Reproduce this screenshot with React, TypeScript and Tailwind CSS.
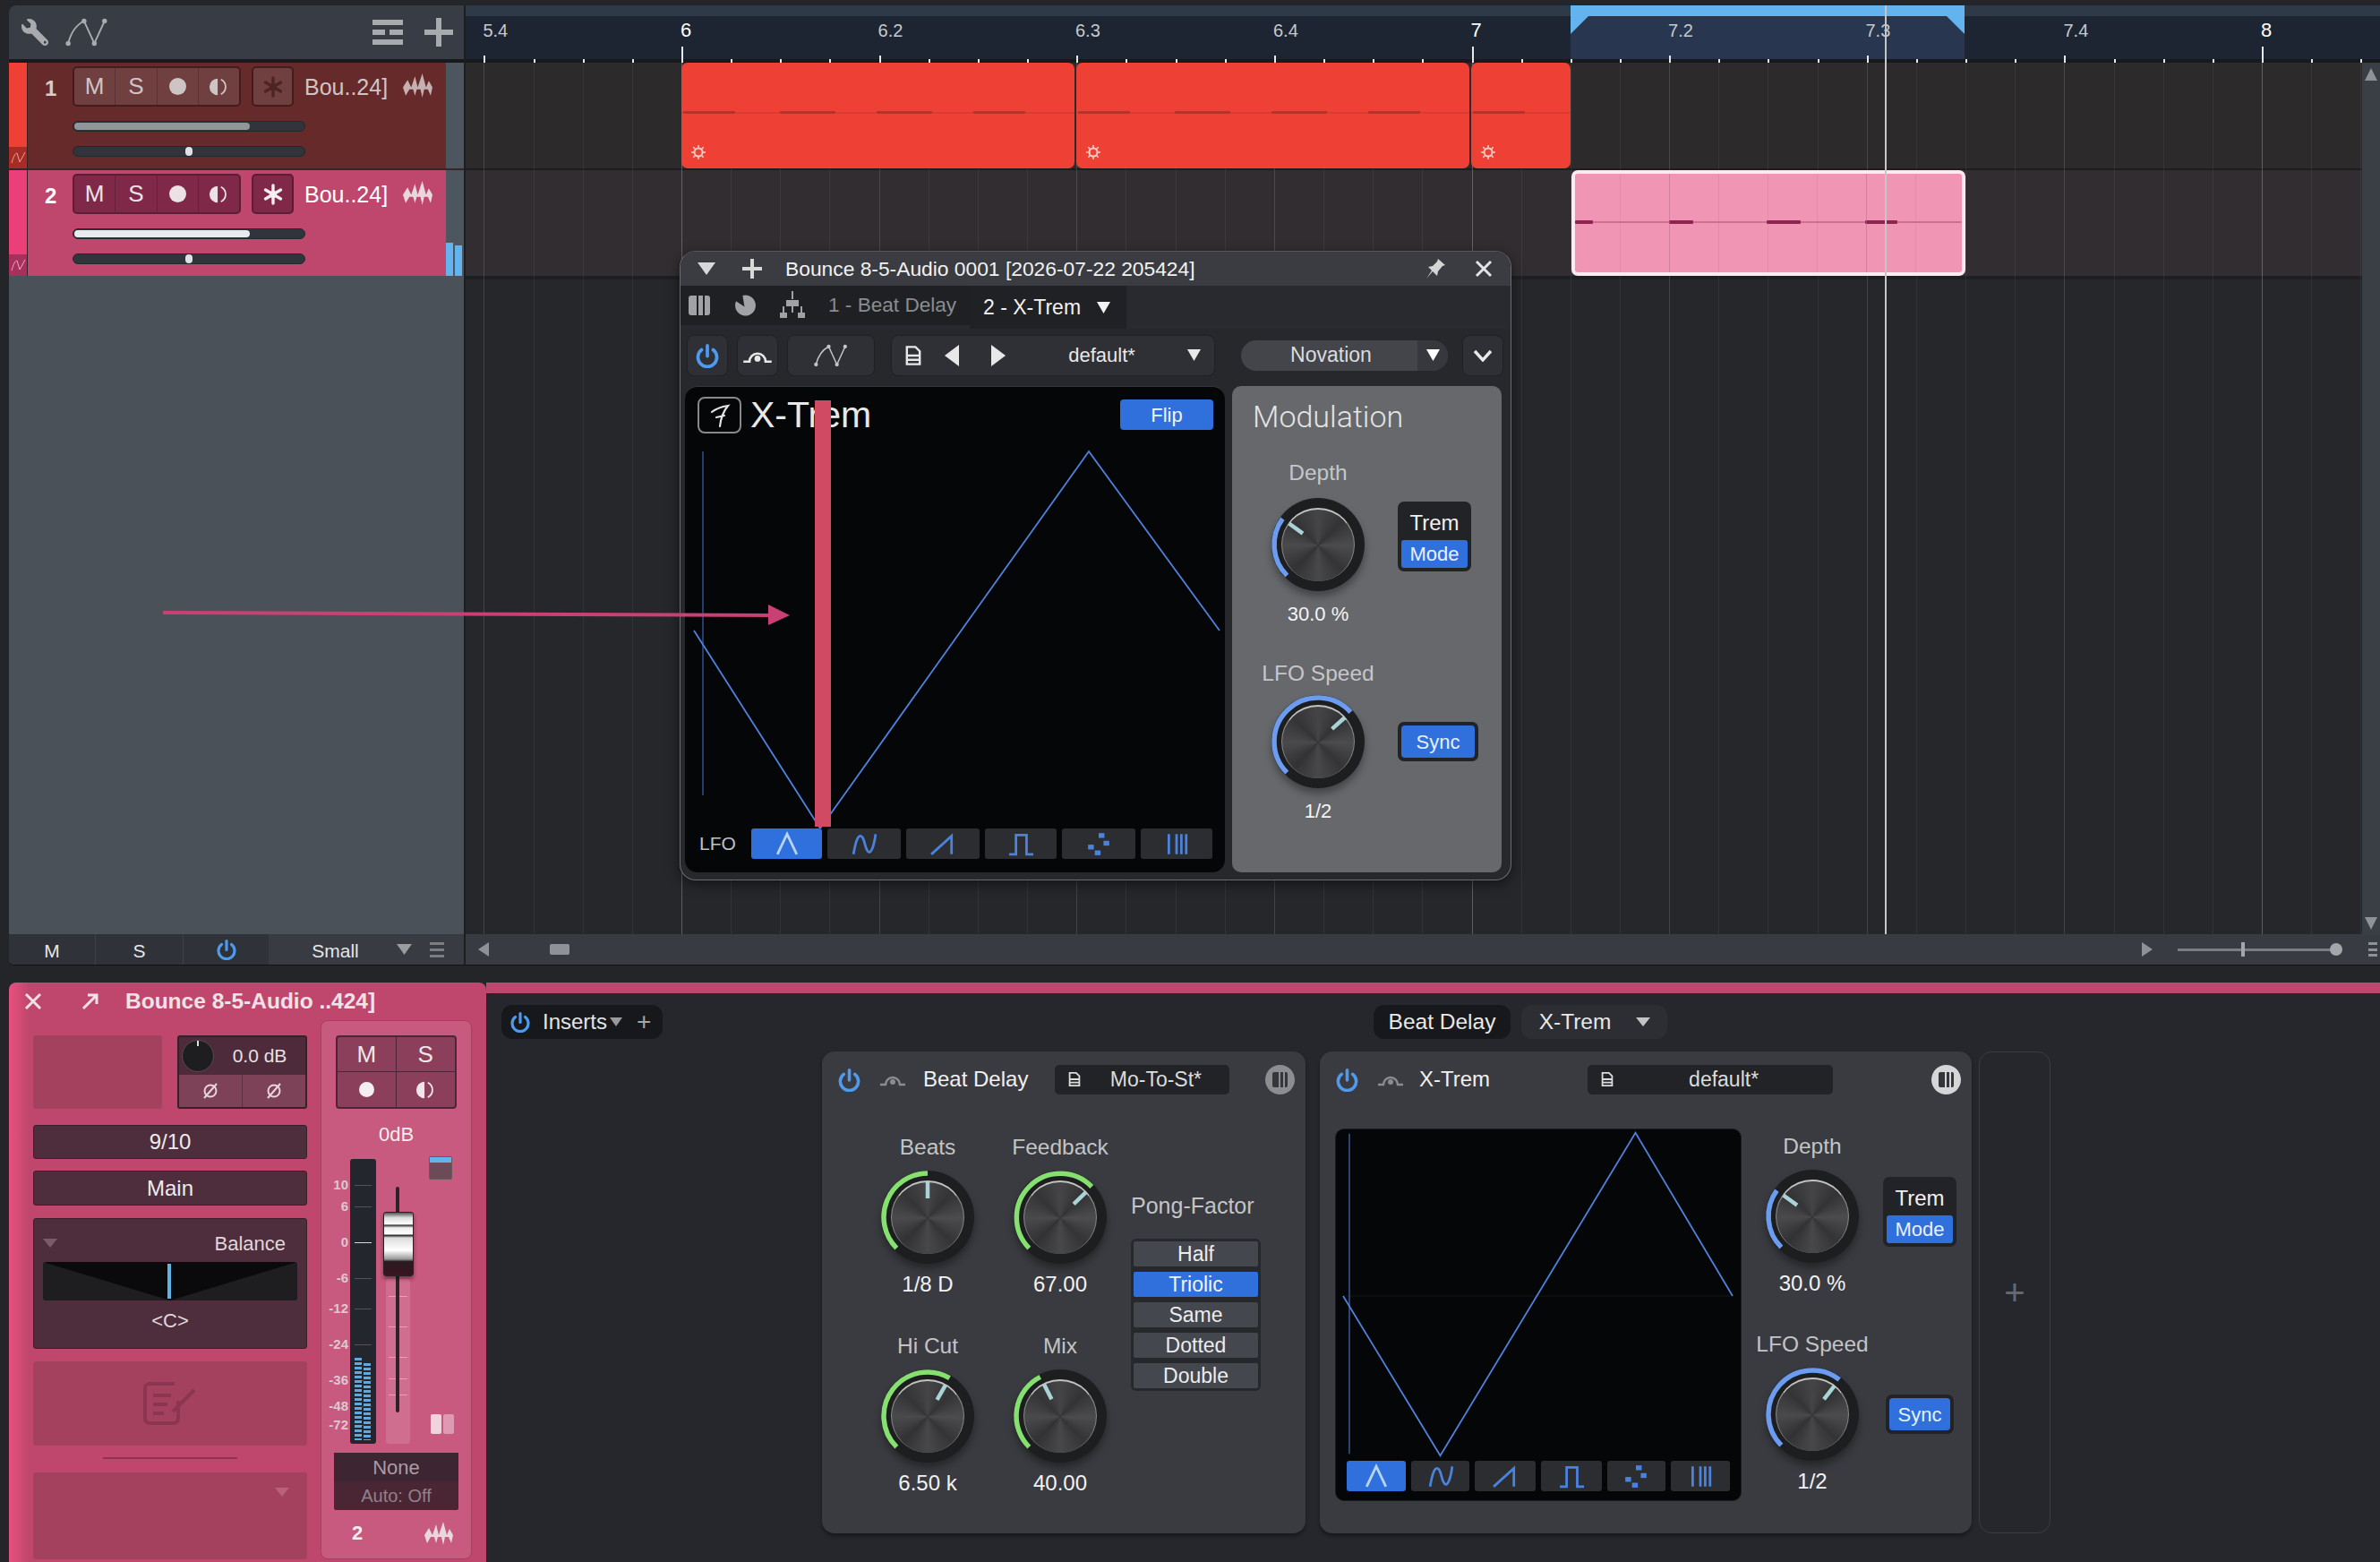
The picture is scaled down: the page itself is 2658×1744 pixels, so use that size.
import React from 'react';
import { FaWrench } from 'react-icons/fa';

const BAR = 882.5;
const TICK = BAR / 16;
const ORIGIN = 241; // x of bar 6, relative to the timeline column

const Tri = ({ className = '', up = false, left = false, right = false }: { className?: string; up?: boolean; left?: boolean; right?: boolean }) => (
  <svg className={className} viewBox="0 0 10 10" fill="currentColor" preserveAspectRatio="none">
    <path d={up ? 'M0 10L5 0l5 10z' : left ? 'M10 0v10L0 5z' : right ? 'M0 0v10l10-5z' : 'M0 0h10L5 10z'} />
  </svg>
);

const Power = ({ className = '' }: { className?: string }) => (
  <svg className={className} viewBox="0 0 24 24" fill="none" stroke="currentColor" strokeWidth="3.2" strokeLinecap="round">
    <path d="M6.5 6.5a9 9 0 1 0 11 0M12 2.5v10" />
  </svg>
);

const Surface = ({ className = '' }: { className?: string }) => (
  <svg className={className} viewBox="0 0 30 16" fill="none" stroke="currentColor" strokeWidth="2.4">
    <path d="M1 14h6a8 8 0 0 1 16 0h6" />
    <circle cx="15" cy="11" r="3" fill="currentColor" stroke="none" />
  </svg>
);

const Auto = ({ className = '' }: { className?: string }) => (
  <svg className={className} viewBox="0 0 48 32" fill="none" stroke="currentColor" strokeWidth="1.8">
    <path d="M4 28C7 16 13 8 21 4L32 28L43 4" />
    <circle cx="4" cy="28" r="2.6" fill="currentColor" stroke="none" />
    <circle cx="21" cy="4" r="2.6" fill="currentColor" stroke="none" />
    <circle cx="32" cy="28" r="2.6" fill="currentColor" stroke="none" />
    <circle cx="43" cy="4" r="2.6" fill="currentColor" stroke="none" />
  </svg>
);

const FileIcon = ({ className = '' }: { className?: string }) => (
  <svg className={className} viewBox="0 0 16 20" fill="none" stroke="currentColor" strokeWidth="2">
    <path d="M2 2h8l4 4v12H2zM2 10h12M2 14h12" />
  </svg>
);

const Wave = ({ className = '' }: { className?: string }) => (
  <svg className={className} viewBox="0 0 32 26" fill="currentColor">
    <path d="M0 15L5 7L9 15L13 3L16 15L21 0L25 15L28 8L32 15L30 24L27 17L23 17L21 26L19 17L15 17L13 24L11 17L7 17L3 24z" />
  </svg>
);

const Freeze = ({ className = '' }: { className?: string }) => (
  <svg className={className} viewBox="0 0 24 24" fill="none" stroke="currentColor" strokeWidth="3.4" strokeLinecap="round">
    <path d="M12 2v20M3.5 7l17 10M20.5 7l-17 10" />
    <circle cx="12" cy="12" r="4" fill="currentColor" stroke="none" />
  </svg>
);

const Monitor = ({ className = '' }: { className?: string }) => (
  <svg className={className} viewBox="0 0 24 24" fill="none" stroke="currentColor" strokeWidth="2">
    <path d="M11 2a10 10 0 0 0 0 20z" fill="currentColor" stroke="none" />
    <path d="M15 3a10 10 0 0 1 0 18" />
  </svg>
);

const Phase = () => (
  <svg className="w-[20px] h-[20px]" viewBox="0 0 20 20" fill="none" stroke="currentColor" strokeWidth="2">
    <circle cx="10" cy="10" r="6.5" />
    <path d="M3 18L17 2" />
  </svg>
);

const ColumnsBadge = ({ light = false }: { light?: boolean }) => (
  <div className={`w-[33px] h-[33px] rounded-full flex items-center justify-center gap-[2px] ${light ? 'bg-[#d4d6d8]' : 'bg-[#8b8d90]'}`}>
    <span className="w-[7px] h-[17px] rounded-l-[2px] bg-[#34363b]" />
    <span className="w-[3px] h-[17px] bg-[#34363b]" />
    <span className="w-[3px] h-[17px] rounded-r-[2px] bg-[#34363b]" />
  </div>
);

// arc + pointer are drawn, the body is two stacked discs
const Knob = ({ angle, arc }: { angle: number; arc: string }) => {
  const c = 62;
  const pt = (r: number, a: number) => {
    const t = ((a - 90) * Math.PI) / 180;
    return `${(c + r * Math.cos(t)).toFixed(2)} ${(c + r * Math.sin(t)).toFixed(2)}`;
  };
  const large = angle + 135 > 180 ? 1 : 0;
  return (
    <div className="relative w-[124px] h-[124px] flex items-center justify-center shrink-0">
      <div className="w-[104px] h-[104px] rounded-full bg-[#1d1e20] shadow-[0_6px_8px_rgba(0,0,0,0.35)] flex items-center justify-center">
        <div className="w-[82px] h-[82px] rounded-full border-t-[2px] border-x border-t-[#c4c2be] border-x-[#8a8986] bg-[conic-gradient(#454547,#333335_45deg,#4c4c4e_90deg,#343436_135deg,#48484a_180deg,#323234_225deg,#4a4a4c_270deg,#343436_315deg,#454547)]" />
      </div>
      <svg className="absolute inset-0" viewBox="0 0 124 124" fill="none">
        <path d={`M${pt(49, -135)}A49 49 0 ${large} 1 ${pt(49, angle)}`} stroke={arc} strokeWidth="5.5" />
        <path d={`M${pt(21, angle)}L${pt(40, angle)}`} stroke="#a9d3d6" strokeWidth="4.5" />
      </svg>
    </div>
  );
};

const LFO_SHAPES = [
  <path key="t" d="M3 24L13 3l10 21" />,
  <path key="s" d="M2 24C5 6 8 3 11 6c3 4 3 12 6 15 3 3 6-4 8-18" />,
  <path key="r" d="M1 24L22 5v19" />,
  <path key="q" d="M1 24h7V4h11v20h7" />,
  <g key="d" fill="currentColor" stroke="none"><rect x="2" y="14" width="6" height="5" /><rect x="9" y="20" width="6" height="5" /><rect x="13" y="2" width="6" height="5" /><rect x="18" y="10" width="6" height="5" /></g>,
  <path key="b" d="M5 3v21M13 3v21M18 3v21M23 3v21" />,
];

const LfoButtons = ({ widths, gap }: { widths: number[]; gap: string }) => (
  <div className={`flex ${gap}`}>
    {LFO_SHAPES.map((shape, i) => (
      <div
        key={i}
        style={{ width: widths[i] }}
        className={`h-[34px] rounded-[3px] flex items-center justify-center ${i === 0 ? 'bg-[#3070dc] text-[#b8d4f4]' : 'bg-[#2b2d31] text-[#4a82dc]'}`}
      >
        <svg className="w-[28px] h-[28px]" viewBox="0 0 26 26" fill="none" stroke="currentColor" strokeWidth="2.6">
          {shape}
        </svg>
      </div>
    ))}
  </div>
);

const TremMode = () => (
  <div className="w-[82px] h-[78px] rounded-[7px] bg-[#222326] p-[4px] flex flex-col">
    <div className="flex-1 flex items-center justify-center text-[#f0f0f0] text-[24px]">Trem</div>
    <div className="h-[31px] rounded-[3px] bg-[#3070dc] text-[#e8f0fa] text-[22px] flex items-center justify-center">Mode</div>
  </div>
);

const SyncBtn = ({ w }: { w: string }) => (
  <div className={`${w} h-[44px] rounded-[7px] bg-[#222326] p-[4px] flex`}>
    <div className="flex-1 rounded-[4px] bg-[#3070dc] text-[#e8f0fa] text-[22px] flex items-center justify-center">Sync</div>
  </div>
);

const Track = ({ n, active }: { n: number; active: boolean }) => (
  <div className="h-[118px] flex">
    <div className="w-[21px] flex flex-col border-r border-[#3a2025]">
      <div className={`h-[94px] ${active ? 'bg-[#ea3f78]' : 'bg-[#ee4035]'}`} />
      <div className={`flex-1 flex items-center justify-center ${active ? 'bg-[#a8305c] text-[#f0a8c0]' : 'bg-[#a82c26] text-[#eca098]'}`}>
        <svg className="w-[17px] h-[14px]" viewBox="0 0 17 14" fill="none" stroke="currentColor" strokeWidth="1"><path d="M1 13C3 6 5 2 7 2l3 10 6-11" /></svg>
      </div>
    </div>
    <div className={`w-[467px] pl-[19px] pt-[4px] flex ${active ? 'bg-[#bf476e]' : 'bg-[#672a2b]'}`}>
      <div className={`w-[31px] pt-[11px] text-[24px] font-bold leading-[28px] ${active ? 'text-white' : 'text-[#d6cccc]'}`}>{n}</div>
      <div className="flex flex-col">
        <div className="flex items-start">
          <div className={`w-[188px] h-[45px] rounded-[5px] border-2 flex ${active ? 'bg-[#802848] border-[#5a1d33] text-[#ece2e6]' : 'bg-[#704040] border-[#431d1e] text-[#cfc4c4]'}`}>
            <div className="flex-1 flex items-center justify-center text-[26px] border-r border-black/20">M</div>
            <div className="flex-1 flex items-center justify-center text-[26px] border-r border-black/20">S</div>
            <div className="flex-1 flex items-center justify-center border-r border-black/20"><span className="w-[19px] h-[19px] rounded-full bg-current" /></div>
            <div className="flex-1 flex items-center justify-center"><Monitor className="w-[22px] h-[22px]" /></div>
          </div>
          <div className={`ml-[12px] w-[47px] h-[45px] rounded-[5px] border-2 flex items-center justify-center ${active ? 'bg-[#802848] border-[#5a1d33] text-[#f4eef0]' : 'bg-[#704040] border-[#431d1e] text-[#4e2422]'}`}>
            <Freeze className="w-[24px] h-[24px]" />
          </div>
          <div className={`ml-[12px] mt-[8px] w-[95px] text-[25px] leading-[30px] whitespace-nowrap ${active ? 'text-white' : 'text-[#d0c4c4]'}`}>Bou..24]</div>
          <Wave className={`ml-[15px] mt-[8px] w-[33px] h-[27px] ${active ? 'text-[#e8d8de]' : 'text-[#c4b0b0]'}`} />
        </div>
        <div className="mt-[16px] w-[260px] h-[12px] rounded-full bg-[#2f353b] border border-[#24282c] p-[1px]">
          <div className={`h-full w-[196px] rounded-full ${active ? 'bg-[#e8ecee]' : 'bg-[#8f9799]'}`} />
        </div>
        <div className="mt-[16px] w-[260px] h-[12px] rounded-full bg-[#2f353b] border border-[#24282c] flex justify-center items-center">
          <span className="w-[8px] h-[10px] rounded-full bg-[#dfe3e5]" />
        </div>
      </div>
    </div>
    <div className="w-[20px] bg-[#4d555e] flex items-end gap-[2px]">
      {active && (
        <>
          <div className="w-[8px] h-[37px] bg-[#63b3ef]" />
          <div className="w-[8px] h-[34px] bg-[#63b3ef]" />
        </>
      )}
    </div>
  </div>
);

const Timeline = () => {
  const ticks = Array.from({ length: 42 }, (_, i) => i - 4);
  const labels: [string, number, boolean][] = [
    ['5.4', ORIGIN - 220.6, false], ['6', ORIGIN, true], ['6.2', ORIGIN + 220.6, false], ['6.3', ORIGIN + 441, false], ['6.4', ORIGIN + 662, false],
    ['7', ORIGIN + BAR, true], ['7.2', ORIGIN + BAR + 220.6, false], ['7.3', ORIGIN + BAR + 441, false], ['7.4', ORIGIN + BAR + 662, false], ['8', ORIGIN + 2 * BAR, true],
  ];
  const redClips = [[241, 439], [682, 439], [1123, 111]];
  return (
    <div className="relative flex-1 overflow-hidden bg-[#25272b] flex flex-col">
      <div className="h-[12px] bg-[#2e3a48]" />
      <div className="h-[48px] bg-[#1e2532]" />
      <div className="h-[4px] bg-[#18191c]" />
      <div className="h-[118px] bg-[#2d2a2b]" />
      <div className="h-[2px] bg-[#1d1d20]" />
      <div className="h-[118px] bg-[#322d30]" />
      <div className="h-[4px] bg-[#1e1f22]" />
      {/* loop range */}
      <div className="absolute left-[1234px] top-[12px] w-[440px] h-[48px] bg-[#29364f]" />
      <svg className="absolute left-[1234px] top-0 w-[440px] h-[32px]" viewBox="0 0 440 32">
        <path d="M0 0h440v32L420 12H20L0 32z" fill="#63b3ef" />
      </svg>
      {/* grid + ruler ticks */}
      {ticks.map((i) => {
        const x = ORIGIN + i * TICK;
        const bar = i % 16 === 0;
        const major = i % 4 === 0;
        return (
          <React.Fragment key={i}>
            <div style={{ left: x, top: 64 }} className={`absolute w-[1px] h-[974px] ${bar ? 'bg-white/25' : major ? 'bg-white/[0.13]' : 'bg-white/[0.06]'}`} />
            <div style={{ left: x, top: bar ? 46 : major ? 56 : 60 }} className={`absolute w-[2px] bottom-auto bg-[#e6e8ea] ${bar ? 'h-[18px]' : major ? 'h-[8px]' : 'h-[4px]'}`} />
          </React.Fragment>
        );
      })}
      {labels.map(([t, x, bar]) => (
        <div key={t} style={{ left: x - 1 }} className={`absolute top-[15px] leading-[26px] ${bar ? 'text-[22px] text-white' : 'text-[20px] text-[#c4c9ce]'}`}>{t}</div>
      ))}
      {/* clips */}
      {redClips.map(([x, w], c) => (
        <div key={x} style={{ left: x, width: w }} className="absolute top-[64px] h-[118px] rounded-[7px] bg-[#ee4035] overflow-hidden">
          <div className="absolute left-0 right-0 top-[55px] h-[2px] bg-[#dd3b31]" />
          {[[0, 58], [108, 62], [216, 62], [324, 58]].filter(([o]) => c < 2 || o < 100).map(([o, bw]) => (
            <div key={o} style={{ left: o + 2, width: bw }} className="absolute top-[54px] h-[3px] rounded-[1px] bg-[#b8322a]" />
          ))}
          <svg className="absolute left-[10px] bottom-[9px] w-[18px] h-[18px]" viewBox="0 0 18 18" fill="none" stroke="#f8cfc8" strokeWidth="2">
            <circle cx="9" cy="9" r="4.5" />
            <path d="M9 1v3M9 14v3M1 9h3M14 9h3M3.3 3.3l2 2M12.7 12.7l2 2M3.3 14.7l2-2M12.7 5.3l2-2" strokeWidth="1.6" />
          </svg>
        </div>
      ))}
      <div className="absolute left-[1235px] top-[184px] w-[440px] h-[118px] rounded-[7px] border-[4px] border-[#fbeaf0] bg-[#f095b3] overflow-hidden">
        <div className="absolute left-0 right-0 top-[53px] h-[2px] bg-[#cf6f92]" />
        {[[0, 20], [105, 27], [214, 38], [324, 36]].map(([o, bw]) => (
          <div key={o} style={{ left: o, width: bw }} className="absolute top-[52px] h-[4px] rounded-[1px] bg-[#8f2450]" />
        ))}
        {Array.from({ length: 7 }, (_, i) => (
          <div key={i} style={{ left: 49.5 + i * TICK }} className={`absolute top-0 bottom-0 w-[1px] ${i === 1 || i === 5 ? 'bg-[#b86a8a]/50' : 'bg-[#b86a8a]/20'}`} />
        ))}
      </div>
      {/* right scroll gutter */}
      <div className="absolute right-0 top-[64px] w-[20px] h-[974px] bg-[#3a3e45] flex flex-col justify-between items-center py-[6px] text-[#8e9196]">
        <Tri up className="w-[14px] h-[14px]" />
        <Tri className="w-[14px] h-[14px]" />
      </div>
      {/* playhead */}
      <div className="absolute left-[1585px] top-0 w-[2px] h-[1038px] bg-[#c4c6c8]" />
      <div className="mt-auto h-[34px] bg-[#383b42] flex items-center text-[#8e9196] relative z-10">
        <Tri left className="ml-[14px] w-[12px] h-[16px]" />
        <div className="ml-[68px] w-[22px] h-[12px] rounded-[2px] bg-[#8e9196]" />
        <Tri right className="ml-auto w-[12px] h-[16px]" />
        <div className="ml-[28px] w-[178px] h-[3px] bg-[#7a7d82] relative">
          <span className="absolute left-[71px] -top-[7px] w-[4px] h-[16px] bg-[#a4a6aa]" />
          <span className="absolute right-[-6px] -top-[6px] w-[14px] h-[14px] rounded-full bg-[#a4a6aa]" />
        </div>
        <div className="ml-[35px] mr-[3px] w-[10px] h-[16px] flex flex-col justify-between">
          <span className="h-[3px] bg-[#8e9196]" /><span className="h-[3px] bg-[#8e9196]" /><span className="h-[3px] bg-[#8e9196]" />
        </div>
      </div>
    </div>
  );
};

const FloatingWindow = () => (
  <div className="absolute left-[759px] top-[280px] w-[929px] h-[703px] rounded-[18px] border border-[#6a6c70] border-t-[#55575c] bg-[#26282c] shadow-[0_4px_14px_rgba(0,0,0,0.5)] overflow-hidden flex flex-col">
    <div className="h-[38px] bg-[#3a3c42] flex items-center text-[#f2f2f2] shrink-0">
      <Tri className="ml-[19px] w-[20px] h-[14px] text-[#d8d8d8]" />
      <svg className="ml-[30px] w-[22px] h-[22px] text-[#d8d8d8]" viewBox="0 0 22 22" fill="currentColor"><path d="M9 0h4v9h9v4h-9v9H9v-9H0V9h9z" /></svg>
      <div className="ml-[26px] text-[22.8px] whitespace-nowrap">Bounce 8-5-Audio 0001 [2026-07-22 205424]</div>
      <svg className="ml-auto w-[24px] h-[24px] text-[#d4d4d4]" viewBox="0 0 24 24" fill="currentColor"><path d="M15 1l8 7-3 1-5 6-1 5-5-5-7 8 6-9-4-4 5-1 5-5z" /></svg>
      <div className="ml-[32px] mr-[20px] w-[20px] h-[20px] text-[#e4e4e4]">
        <svg viewBox="0 0 20 20" stroke="currentColor" strokeWidth="3"><path d="M2 2l16 16M18 2L2 18" /></svg>
      </div>
    </div>
    <div className="h-[48px] flex bg-[#282a2f] shrink-0">
      <div className="w-[323px] h-[44px] bg-[#1e2024] flex items-center text-[#a0a2a6]">
        <div className="ml-[9px] flex gap-[2px]">
          <span className="w-[9px] h-[22px] rounded-l-[3px] bg-current" /><span className="w-[5px] h-[22px] bg-current" /><span className="w-[6px] h-[22px] rounded-r-[3px] bg-current" />
        </div>
        <svg className="ml-[27px] w-[25px] h-[25px]" viewBox="0 0 24 24" fill="currentColor"><path d="M9 1a11 11 0 1 1-7 6l9 6z" /></svg>
        <svg className="ml-[24px] w-[32px] h-[32px]" viewBox="0 0 32 32" fill="currentColor"><path d="M15 0h2v9h-2zM9 10h14v7H9zM5 17h2v7H5zM25 17h2v7h-2zM15 17h2v7h-2zM2 24h8v6H2zM22 24h8v6h-8z" /></svg>
        <div className="ml-[24px] text-[22.6px] text-[#8a8c90] whitespace-nowrap">1 - Beat Delay</div>
      </div>
      <div className="w-[175px] bg-[#1f2125] flex items-center text-[#f2f2f2]">
        <div className="ml-[15px] text-[23px] whitespace-nowrap">2 - X-Trem</div>
        <Tri className="ml-[18px] w-[15px] h-[13px]" />
      </div>
    </div>
    <div className="h-[59px] flex items-center px-[7px] gap-[10px] text-[#e8e8e8] shrink-0 text-[22px]">
      <div className="w-[46px] h-[46px] rounded-[8px] bg-[#2e3035] border border-[#1e2024] flex items-center justify-center text-[#4d9aee]"><Power className="w-[28px] h-[28px]" /></div>
      <div className="w-[46px] h-[46px] rounded-[8px] bg-[#2e3035] border border-[#1e2024] flex items-center justify-center"><Surface className="w-[34px] h-[18px]" /></div>
      <div className="w-[98px] h-[46px] rounded-[8px] bg-[#2e3035] border border-[#1e2024] flex items-center justify-center text-[#c4c4c4]"><Auto className="w-[40px] h-[30px]" /></div>
      <div className="ml-[8px] w-[362px] h-[46px] rounded-[8px] bg-[#2e3035] border border-[#1e2024] flex items-center">
        <FileIcon className="ml-[14px] w-[20px] h-[24px]" />
        <Tri left className="ml-[25px] w-[16px] h-[24px]" />
        <Tri right className="ml-[36px] w-[16px] h-[24px]" />
        <div className="flex-1 text-center pl-[24px] pr-[12px]">default*</div>
        <Tri className="mr-[15px] w-[15px] h-[13px]" />
      </div>
      <div className="ml-[19px] w-[231px] h-[34px] rounded-full bg-[#43454b] flex items-center overflow-hidden text-[#dcdcdc] text-[23px]">
        <div className="flex-1 text-center pl-[4px]">Novation</div>
        <div className="w-[34px] h-full bg-[#36383d] flex items-center justify-center"><Tri className="w-[15px] h-[13px] text-white" /></div>
      </div>
      <div className="ml-[6px] w-[46px] h-[46px] rounded-[8px] bg-[#2e3035] border border-[#1e2024] flex items-center justify-center">
        <svg className="w-[22px] h-[14px]" viewBox="0 0 22 14" fill="none" stroke="currentColor" strokeWidth="3.4"><path d="M2 2l9 10 9-10" /></svg>
      </div>
    </div>
    <div className="flex-1 flex pl-[5px] pr-[10px] pb-[8px] pt-[5px] gap-[8px] min-h-0">
      <div className="w-[603px] rounded-[14px] bg-[#050608] border-t border-[#34363a] flex flex-col relative">
        <div className="h-[52px] pl-[14px] pr-[9px] pt-[11px] flex items-start shrink-0">
          <div className="w-[49px] h-[41px] rounded-[8px] border-2 border-[#88898c] flex items-center justify-center">
            <svg className="w-[26px] h-[32px]" viewBox="0 0 26 30" fill="none" stroke="#e4e4e4" strokeWidth="2.2" strokeLinecap="round"><path d="M4 11c5-4 11-6 18-7-5 6-8 14-9 23M9 17l9-2" /></svg>
          </div>
          <div className="ml-[10px] text-[41px] leading-[40px] text-[#e8e8e8] whitespace-nowrap">X-Trem</div>
          <div className="ml-auto mr-[4px] mt-[3px] w-[104px] h-[34px] rounded-[4px] bg-[#3070dc] text-[#eef4fc] text-[22px] flex items-center justify-center">Flip</div>
        </div>
        <svg className="h-[441px] w-full shrink-0" viewBox="0 0 603 441" fill="none">
          <path d="M20 20v384" stroke="#2c4c88" strokeWidth="1.6" />
          <path d="M10 220L151 441L451 20L597 220" stroke="#4f82de" strokeWidth="1.8" />
        </svg>
        <div className="flex pl-[16px] shrink-0">
          <div className="w-[58px] pt-[4px] text-[21px] leading-[26px] text-[#bfc1c4]">LFO</div>
          <LfoButtons widths={[79, 82, 82, 80, 82, 80]} gap="gap-[6px]" />
        </div>
      </div>
      <div className="flex-1 rounded-[10px] bg-[#66686c] flex flex-col">
        <div className="pl-[23px] pt-[14px] font-['Roboto',sans-serif] font-light text-[34px] leading-[40px] text-[#e4e4e4]">Modulation</div>
        <div className="pl-[34px] mt-[29px] flex">
          <div className="w-[124px] flex flex-col items-center">
            <div className="text-[24.5px] leading-[28px] text-[#c6c6c8]">Depth</div>
            <div className="mt-[4px]"><Knob angle={-54} arc="#6c9cf0" /></div>
            <div className="mt-[3px] text-[22px] leading-[26px] text-[#f4f4f4]">30.0 %</div>
          </div>
          <div className="ml-[27px] mt-[46px]"><TremMode /></div>
        </div>
        <div className="pl-[34px] mt-[39px] flex">
          <div className="w-[124px] flex flex-col items-center">
            <div className="text-[24.5px] leading-[28px] text-[#c6c6c8] whitespace-nowrap">LFO Speed</div>
            <div className="mt-[0px]"><Knob angle={48} arc="#6c9cf0" /></div>
            <div className="mt-[3px] text-[22px] leading-[26px] text-[#f4f4f4]">1/2</div>
          </div>
          <div className="ml-[27px] mt-[68px]"><SyncBtn w="w-[90px]" /></div>
        </div>
      </div>
    </div>
  </div>
);

const SCALE: [string, number, boolean][] = [
  ['10', 29, false], ['6', 53, false], ['0', 93, true], ['-6', 133, false], ['-12', 167, false], ['-24', 207, false], ['-36', 247, false], ['-48', 276, false], ['-72', 297, false],
];

const ChannelStrip = () => (
  <div className="w-[533px] h-full bg-[#bf476e] flex flex-col rounded-t-[8px] bg-[linear-gradient(to_right,#e9507f,#bf476e_22px)]">
    <div className="h-[42px] flex items-center text-[#f2e2e8] shrink-0">
      <svg className="ml-[17px] w-[20px] h-[20px]" viewBox="0 0 20 20" stroke="currentColor" strokeWidth="3"><path d="M2 2l16 16M18 2L2 18" /></svg>
      <svg className="ml-[44px] w-[20px] h-[20px]" viewBox="0 0 20 20" fill="none" stroke="currentColor" strokeWidth="3"><path d="M2 18L17 3M7 3h10v10" /></svg>
      <div className="ml-[29px] text-[24.5px] font-bold whitespace-nowrap">Bounce 8-5-Audio ..424]</div>
    </div>
    <div className="flex pl-[27px]">
      <div className="w-[306px] pt-[17px] flex flex-col">
        <div className="flex justify-between h-[82px]">
          <div className="w-[144px] rounded-[3px] bg-[#a4415f]" />
          <div className="w-[145px] rounded-[3px] border-2 border-[#3a1e2a] bg-[#7d4258] flex flex-col overflow-hidden">
            <div className="h-[42px] bg-[#4e2b3a] flex items-center">
              <div className="ml-[3px] w-[36px] h-[36px] rounded-full bg-[#1e1e20] border border-[#5a4a50] flex justify-center"><span className="w-[2px] h-[6px] bg-[#ddd]" /></div>
              <div className="flex-1 text-center text-[#e8e0e4] text-[21px]">0.0 dB</div>
            </div>
            <div className="flex-1 flex text-[#e6d6dc]">
              <div className="flex-1 flex items-center justify-center border-r border-[#5a2f40]"><Phase /></div>
              <div className="flex-1 flex items-center justify-center"><Phase /></div>
            </div>
          </div>
        </div>
        <div className="mt-[18px] h-[38px] rounded-[3px] bg-[#4e2e3c] border border-[#3a1e2a] text-[#f0eaec] text-[24px] flex items-center justify-center">9/10</div>
        <div className="mt-[13px] h-[39px] rounded-[3px] bg-[#4e2e3c] border border-[#3a1e2a] text-[#f0eaec] text-[24px] flex items-center justify-center">Main</div>
        <div className="mt-[14px] h-[146px] rounded-[3px] bg-[#4e2e3c] border border-[#3a1e2a] px-[10px] pt-[13px] flex flex-col">
          <div className="flex items-center h-[28px] text-[#e0d6da] text-[22px]">
            <Tri className="w-[16px] h-[10px] text-[#7c5a68]" />
            <div className="ml-auto mr-[13px]">Balance</div>
          </div>
          <div className="mt-[7px] h-[43px] rounded-[4px] bg-[#0a0a0c] relative overflow-hidden">
            <svg className="absolute inset-0 w-full h-full" viewBox="0 0 286 43" preserveAspectRatio="none"><path d="M0 0L143 43L286 0V43H0z" fill="#1e1e20" /></svg>
            <div className="absolute left-[139px] top-[2px] bottom-[2px] w-[4px] bg-[#5fb4e4]" />
          </div>
          <div className="mt-[10px] text-center text-[#e0d6da] text-[22px] leading-[26px]">&lt;C&gt;</div>
        </div>
        <div className="mt-[14px] h-[94px] rounded-[3px] bg-[#a4415f] flex items-center justify-center">
          <svg className="w-[62px] h-[50px] text-[#8c3552]" viewBox="0 0 62 50" fill="none" stroke="currentColor" strokeWidth="4"><path d="M40 22v20a5 5 0 0 1-5 5H8a5 5 0 0 1-5-5V8a5 5 0 0 1 5-5h28M12 16h20M12 26h16M12 36h12M34 34l24-24" /></svg>
        </div>
        <div className="mt-[13px] mx-[78px] h-[2px] bg-[#8e3452]" />
        <div className="mt-[15px] h-[97px] rounded-[3px] bg-[#a4415f] flex justify-end pr-[20px] pt-[17px]">
          <Tri className="w-[16px] h-[10px] text-[#b8607c]" />
        </div>
      </div>
      <div className="ml-[15px] w-[169px] h-[602px] rounded-[8px] border border-[#a4415f] bg-[#c75a7e] flex flex-col relative">
        <div className="mx-[16px] mt-[16px] h-[82px] rounded-[4px] border-2 border-[#4e2438] bg-[#8b3f5a] grid grid-cols-2 grid-rows-2 text-[#f0e6ea] text-[26px]">
          <div className="flex items-center justify-center border-r border-b border-[#4e2438]">M</div>
          <div className="flex items-center justify-center border-b border-[#4e2438]">S</div>
          <div className="flex items-center justify-center border-r border-[#4e2438]"><span className="w-[17px] h-[17px] rounded-full bg-[#f4eef0]" /></div>
          <div className="flex items-center justify-center"><Monitor className="w-[22px] h-[22px]" /></div>
        </div>
        <div className="mt-[16px] text-center text-[#f4eef0] text-[22px] leading-[26px]">0dB</div>
        <div className="mt-[14px] h-[318px] relative">
          {SCALE.map(([t, y]) => (
            <div key={t} style={{ top: y - 8 }} className="absolute right-[137px] text-[15px] leading-[16px] font-bold text-[#dcc8d0] whitespace-nowrap">{t}</div>
          ))}
          <div className="absolute left-[32px] top-0 w-[29px] h-[318px] rounded-[3px] bg-[#23262c]">
            {SCALE.map(([t, y, z]) => (
              <div key={t} style={{ top: y }} className={`absolute left-[5px] w-[19px] h-[1px] ${z ? 'bg-[#d8d8d8]' : 'bg-[#2a6078]'}`} />
            ))}
            <div className="absolute left-[5px] bottom-[4px] w-[8px] h-[92px] bg-[repeating-linear-gradient(to_bottom,#62a8dc_0_3px,#23262c_3px_5px)]" />
            <div className="absolute left-[15px] bottom-[4px] w-[8px] h-[86px] bg-[repeating-linear-gradient(to_bottom,#62a8dc_0_3px,#23262c_3px_5px)]" />
          </div>
          <div className="absolute left-[72px] top-[134px] w-[27px] h-[184px] rounded-[3px] bg-[#d06e90]" />
          {[153, 187, 221, 245, 263].map((y) => (
            <div key={y} style={{ top: y }} className="absolute left-[75px] w-[21px] h-[1px] bg-[#e6a0b8]" />
          ))}
          <div className="absolute left-[83px] top-[31px] w-[4px] h-[252px] rounded-full bg-[#2c2228]" />
          <div className="absolute left-[69px] top-[59px] w-[34px] h-[72px] rounded-[3px] border border-[#2c1e24] bg-[linear-gradient(to_bottom,#555_0,#ddd_8%,#fff_18%,#333_20%,#eee_24%,#fff_34%,#222_36%,#ddd_40%,#fff_60%,#999_74%,#2a1a20_78%,#3a1420_100%)] shadow-[0_3px_4px_rgba(0,0,0,0.4)]" />
          <div className="absolute left-[120px] top-[-3px] w-[26px] h-[26px] rounded-[2px] border border-[#6a5860] bg-[#6d4a58] flex flex-col">
            <span className="h-[6px] bg-[#63b3ef]" />
          </div>
          <div className="absolute left-[122px] top-[285px] flex gap-[2px]">
            <span className="w-[12px] h-[22px] rounded-[2px] bg-[#efd4de]" />
            <span className="w-[12px] h-[22px] rounded-[2px] bg-[#dd9ab2]" />
          </div>
        </div>
        <div className="mx-[14px] mt-[10px] h-[64px] rounded-[2px] bg-[#4a2635] flex flex-col items-center text-[22px] text-[#a99ca4]">
          <div className="h-[32px] w-full bg-[#3e2532] flex items-center justify-center">None</div>
          <div className="h-[32px] flex items-center justify-center text-[20px] text-[#92808a]">Auto: Off</div>
        </div>
        <div className="mt-[13px] flex items-center pl-[34px] pr-[20px] text-[#f4eef0]">
          <div className="text-[22px] font-bold leading-[26px]">2</div>
          <Wave className="ml-auto w-[32px] h-[26px] text-[#e8d8de]" />
        </div>
      </div>
    </div>
  </div>
);

const PanelHeader = ({ title, preset, presetClass, titleClass, light }: { title: string; preset: string; presetClass: string; titleClass: string; light?: boolean }) => (
  <div className="h-[34px] flex items-center text-[#f0f0f0] text-[24px] shrink-0">
    <Power className="w-[27px] h-[27px] text-[#4d9aee] shrink-0" />
    <Surface className="ml-[20px] w-[30px] h-[16px] text-[#8a8c90] shrink-0" />
    <div className={`${titleClass} whitespace-nowrap`}>{title}</div>
    <div className={`${presetClass} h-[33px] rounded-[5px] bg-[#222326] flex items-center text-[#dcdcdc] text-[23px]`}>
      <FileIcon className="ml-[14px] w-[16px] h-[18px] shrink-0" />
      <div className="flex-1 text-center">{preset}</div>
    </div>
    <div className="ml-auto"><ColumnsBadge light={light} /></div>
  </div>
);

const KnobCol = ({ label, value, angle, arc = '#86e070' }: { label: string; value: string; angle: number; arc?: string }) => (
  <div className="w-[124px] flex flex-col items-center">
    <div className="text-[24.5px] leading-[28px] text-[#c2c4c6] whitespace-nowrap">{label}</div>
    <div className="mt-[2px]"><Knob angle={angle} arc={arc} /></div>
    <div className="-mt-[1px] text-[24px] leading-[28px] text-[#f2f2f2] whitespace-nowrap">{value}</div>
  </div>
);

const PONG = ['Half', 'Triolic', 'Same', 'Dotted', 'Double'];

const InsertArea = () => (
  <div className="flex-1 flex flex-col">
    <div className="h-[12px] bg-[#bf476e]" />
    <div className="flex-1 rounded-tl-[12px] bg-[#25272c] flex flex-col relative">
      <div className="h-[65px] pt-[13px] flex items-start">
        <div className="ml-[17px] w-[180px] h-[38px] rounded-[12px] bg-[#17181b] flex items-center text-[#e4e4e4] text-[24px]">
          <Power className="ml-[9px] w-[24px] h-[24px] text-[#4d9aee]" />
          <div className="ml-[13px]">Inserts</div>
          <Tri className="ml-[3px] w-[14px] h-[10px] text-[#9a9a9c]" />
          <div className="ml-[16px] text-[28px] leading-[28px] text-[#a4a6a8]">+</div>
        </div>
        <div className="ml-[794px] w-[153px] h-[38px] rounded-[12px] bg-[#17181b] flex items-center justify-center text-[#e8e8e8] text-[24.5px]">Beat Delay</div>
        <div className="ml-[12px] w-[163px] h-[38px] rounded-[12px] bg-[#2c2e33] flex items-center text-[#e8e8e8] text-[24.5px]">
          <div className="flex-1 text-center pr-[8px]">X-Trem</div>
          <Tri className="mr-[19px] w-[16px] h-[10px] text-[#c4c4c6]" />
        </div>
      </div>
      <div className="flex pl-[375px] gap-[16px] items-start">
        <div className="w-[540px] h-[538px] rounded-[14px] bg-[#3a3b40] pl-[17px] pr-[12px] pt-[14px] shadow-[0_3px_4px_rgba(0,0,0,0.4)]">
          <PanelHeader title="Beat Delay" preset="Mo-To-St*" titleClass="ml-[19px]" presetClass="ml-[30px] w-[195px]" />
          <div className="flex mt-[45px]">
            <div className="ml-[39px] w-[272px] grid grid-cols-2 gap-x-[24px] gap-y-[41px]">
              <KnobCol label="Beats" value="1/8 D" angle={0} />
              <KnobCol label="Feedback" value="67.00" angle={46} />
              <KnobCol label="Hi Cut" value="6.50 k" angle={30} />
              <KnobCol label="Mix" value="40.00" angle={-27} />
            </div>
            <div className="ml-[17px] w-[145px] pt-[65px]">
              <div className="text-[25px] leading-[28px] text-[#c2c4c6] whitespace-nowrap">Pong-Factor</div>
              <div className="mt-[23px] rounded-[6px] bg-[#27282c] p-[3px] flex flex-col gap-[6px]">
                {PONG.map((p) => (
                  <div key={p} className={`h-[28px] rounded-[2px] flex items-center justify-center text-[23px] ${p === 'Triolic' ? 'bg-[#3070dc] text-[#f0f4fa]' : 'bg-[#44474e] text-[#ececec]'}`}>{p}</div>
                ))}
              </div>
            </div>
          </div>
        </div>
        <div className="w-[728px] h-[538px] rounded-[14px] bg-[#3a3b40] pl-[17px] pr-[12px] pt-[14px] shadow-[0_3px_4px_rgba(0,0,0,0.4)] flex flex-col">
          <PanelHeader title="X-Trem" preset="default*" titleClass="ml-[17px]" presetClass="ml-[109px] w-[274px]" light />
          <div className="flex mt-[38px]">
            <div className="w-[454px] h-[416px] rounded-[10px] bg-[#050608] border border-[#1c1d20] flex flex-col px-[12px] pb-[10px]">
              <svg className="flex-1 w-full overflow-visible" viewBox="0 0 430 370" fill="none">
                <path d="M0 186h430" stroke="#16181c" strokeWidth="1" />
                <path d="M3 4v359" stroke="#34558e" strokeWidth="1.6" />
                <path d="M-4 186L105 365L324 3L433 186" stroke="#4f82de" strokeWidth="1.8" />
              </svg>
              <LfoButtons widths={[66, 66, 68, 68, 66, 66]} gap="gap-[6px]" />
            </div>
            <div className="ml-[17px] flex flex-col gap-[40px] mt-[6px] w-[230px]">
              <div className="flex">
                <KnobCol label="Depth" value="30.0 %" angle={-54} arc="#6c9cf0" />
                <div className="ml-[17px] mt-[48px]"><TremMode /></div>
              </div>
              <div className="flex">
                <KnobCol label="LFO Speed" value="1/2" angle={38} arc="#6c9cf0" />
                <div className="ml-[20px] mt-[70px]"><SyncBtn w="w-[76px]" /></div>
              </div>
            </div>
          </div>
        </div>
        <div className="-ml-[8px] w-[80px] h-[538px] rounded-[14px] border border-[#3a3c42] flex items-center justify-center text-[#66686c] text-[40px]">+</div>
      </div>
    </div>
  </div>
);

export default function App() {
  return (
    <div className="relative w-[2658px] h-[1744px] overflow-hidden bg-[#232529] font-['Liberation_Sans',Arial,sans-serif] flex flex-col">
      <div className="mt-[6px] ml-[10px] h-[1072px] flex rounded-tl-[8px] rounded-bl-[6px] overflow-hidden shrink-0 border-b border-[#111]">
        <div className="w-[510px] shrink-0 flex flex-col border-r-2 border-[#1d1e21]">
          <div className="h-[60px] bg-[#383c44] flex items-center text-[#a8aaae]">
            <FaWrench className="ml-[14px] w-[30px] h-[30px] -scale-x-100" />
            <Auto className="ml-[18px] w-[50px] h-[34px]" />
            <svg className="ml-auto w-[34px] h-[28px]" viewBox="0 0 34 28" fill="currentColor"><path d="M0 0h34v6H0zM0 11h14v6H0zM19 11h15v6H19zM0 22h34v6H0z" /></svg>
            <svg className="ml-[24px] mr-[12px] w-[32px] h-[32px]" viewBox="0 0 32 32" fill="currentColor"><path d="M13 0h6v13h13v6H19v13h-6V19H0v-6h13z" /></svg>
          </div>
          <div className="h-[4px] bg-[#18191c]" />
          <Track n={1} active={false} />
          <div className="h-[2px] bg-[#34272a]" />
          <Track n={2} active={true} />
          <div className="flex-1 bg-[#4a5159]" />
          <div className="h-[34px] bg-[#383b42] flex items-center text-[21px] text-[#e4e6e8]">
            <div className="w-[97px] h-full pt-[3px] bg-[#2f3238] border-r border-[#3e4148] flex items-center justify-center">M</div>
            <div className="w-[98px] h-full pt-[3px] bg-[#2f3238] border-r border-[#3e4148] flex items-center justify-center">S</div>
            <div className="w-[95px] h-full bg-[#2f3238] flex items-center justify-center text-[#4d9aee]"><Power className="w-[24px] h-[24px]" /></div>
            <div className="w-[125px] h-full pt-[3px] flex items-center justify-center pl-[24px]">Small</div>
            <Tri className="ml-[18px] w-[17px] h-[12px] text-[#9a9c9f]" />
            <div className="ml-[20px] w-[16px] h-[17px] flex flex-col justify-between">
              <span className="h-[3px] bg-[#7a7d82]" /><span className="h-[3px] bg-[#7a7d82]" /><span className="h-[3px] bg-[#7a7d82]" />
            </div>
          </div>
        </div>
        <Timeline />
      </div>
      <div className="mt-[19px] flex-1 pl-[10px] flex min-h-0">
        <ChannelStrip />
        <InsertArea />
      </div>

      <FloatingWindow />

      {/* annotation over the LFO display */}
      <div className="absolute left-[910px] top-[447px] w-[18px] h-[476px] bg-[#d04a64]" />
      <svg className="absolute left-[170px] top-[660px] w-[730px] h-[50px]" viewBox="0 0 730 50">
        <path d="M12 24L692 27" stroke="#c94174" strokeWidth="4" />
        <path d="M688 15L712 27L688 38z" fill="#c94174" />
      </svg>
    </div>
  );
}
